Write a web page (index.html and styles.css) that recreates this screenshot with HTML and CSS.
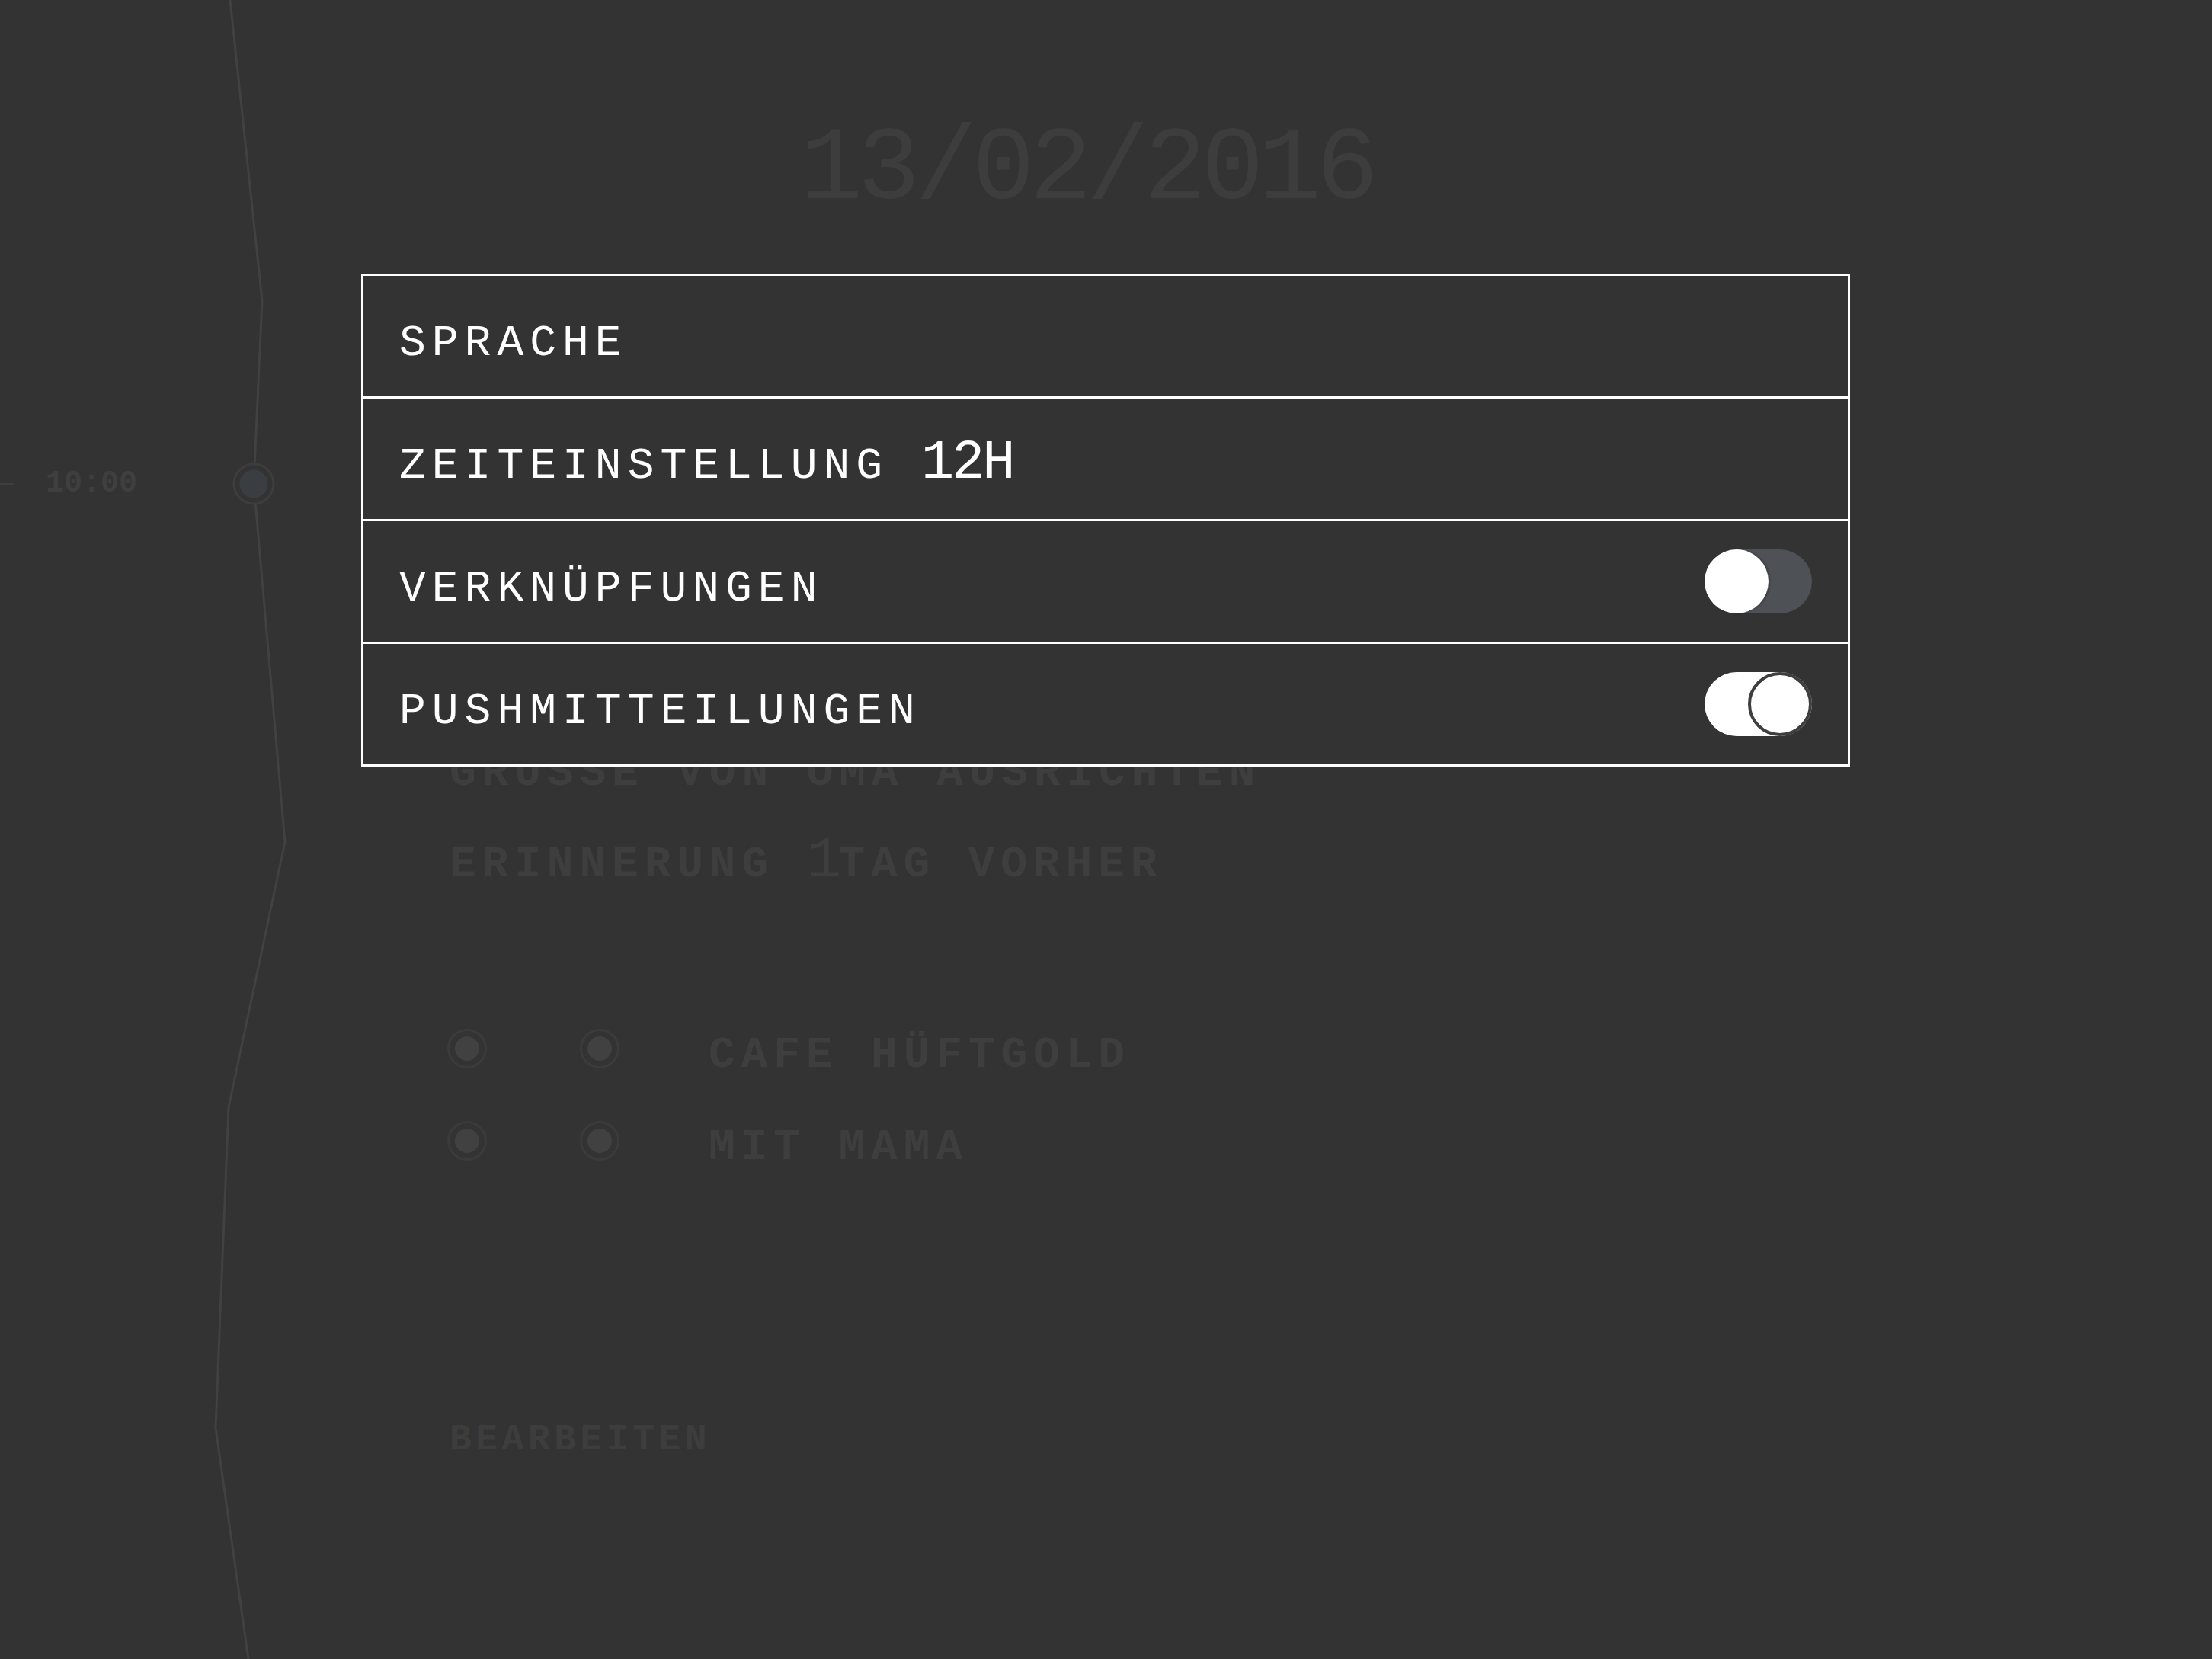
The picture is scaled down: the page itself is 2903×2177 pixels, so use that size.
FILE: index.html
```html
<!DOCTYPE html>
<html lang="de">
<head>
<meta charset="utf-8">
<title>Einstellungen</title>
<link rel="stylesheet" href="styles.css">
</head>
<body>
<div class="page">
  <svg class="timeline" width="2903" height="2177" viewBox="0 0 2903 2177" aria-hidden="true">
    <polyline class="timeline-line" points="302,0 344,394 333,635 374,1105 300,1453 283,1874 326,2177"/>
    <circle class="node-ring" cx="333" cy="635" r="26"/>
    <circle class="node-core" cx="333" cy="635" r="18.5"/>
  </svg>
  <div class="time-marker"><span class="tick"></span><span class="time">10:00</span></div>

  <main class="content">
    <div class="date">13/02/2016</div>
    <div class="note note-first">GRUSSE VON OMA AUSRICHTEN</div>
    <div class="note note-second">ERINNERUNG <span class="num">1</span>TAG VORHER</div>
    <div class="place place-first">
      <span class="radio"><span class="dot"></span></span>
      <span class="radio"><span class="dot"></span></span>
      <span class="place-name">CAFE HÜFTGOLD</span>
    </div>
    <div class="place place-second">
      <span class="radio"><span class="dot"></span></span>
      <span class="radio"><span class="dot"></span></span>
      <span class="place-name">MIT MAMA</span>
    </div>
    <div class="edit">BEARBEITEN</div>
  </main>

  <section class="settings">
    <div class="row"><span class="label">SPRACHE</span></div>
    <div class="row"><span class="label">ZEITEINSTELLUNG <span class="big">12H</span></span></div>
    <div class="row"><span class="label">VERKNÜPFUNGEN</span><span class="toggle toggle-off"><span class="knob"></span></span></div>
    <div class="row"><span class="label">PUSHMITTEILUNGEN</span><span class="toggle toggle-on"><span class="knob"></span></span></div>
  </section>
</div>
</body>
</html>
```
FILE: styles.css
```css
html, body {
  margin: 0;
  padding: 0;
  background: #333333;
}

body {
  font-family: "Liberation Mono", "DejaVu Sans Mono", monospace;
}

.page {
  position: relative;
  width: 2903px;
  height: 2177px;
  overflow: hidden;
  background: #333333;
}

/* timeline diagram */
.timeline {
  position: absolute;
  left: 0;
  top: 0;
}

.timeline-line {
  fill: none;
  stroke: #414141;
  stroke-width: 3;
}

.node-ring {
  fill: #333333;
  stroke: #3d3d3d;
  stroke-width: 3;
}

.node-core {
  fill: #3a3e42;
}

.time-marker {
  position: absolute;
  left: 0;
  top: 615px;
  display: flex;
  align-items: center;
  gap: 42px;
  height: 40px;
}

.tick {
  display: block;
  width: 18px;
  height: 3px;
  background: #3d3d3d;
}

.time {
  font-size: 40px;
  line-height: 40px;
  color: #3f3f3f;
  font-weight: bold;
}

/* background content column */
.content {
  padding-left: 590px;
  padding-top: 155px;
  color: #3e3e3e;
}

.date {
  margin-left: 460px;
  font-size: 137px;
  line-height: 137px;
  letter-spacing: -7px;
  color: #3d3d3d;
}

.note {
  font-size: 58px;
  line-height: 58px;
  letter-spacing: 7.8px;
  font-weight: bold;
}

.note-first {
  margin-top: 694px;
}

.note-second {
  margin-top: 62px;
}

.num {
  font-size: 76px;
  line-height: 0;
  letter-spacing: -4px;
  font-weight: normal;
}

.place {
  display: flex;
  align-items: center;
  height: 60px;
  margin-left: -3px;
}

.place-first {
  margin-top: 182px;
}

.place-second {
  margin-top: 61px;
}

.radio {
  width: 52px;
  height: 52px;
  box-sizing: border-box;
  border: 3px solid #3b3b3b;
  border-radius: 50%;
  display: flex;
  align-items: center;
  justify-content: center;
  margin-right: 122px;
}

.radio + .radio {
  margin-right: 117px;
}

.dot {
  width: 32px;
  height: 32px;
  border-radius: 50%;
  background: #424141;
}

.place-name {
  font-size: 58px;
  line-height: 58px;
  letter-spacing: 7.8px;
  margin-top: 18px;
  font-weight: bold;
}

.edit {
  margin-top: 338px;
  font-size: 48px;
  line-height: 48px;
  letter-spacing: 5.5px;
  font-weight: bold;
  color: #3d3d3d;
}

/* settings overlay */
.settings {
  position: absolute;
  left: 474px;
  top: 359px;
  width: 1954px;
  box-sizing: border-box;
  border: 3px solid #ffffff;
  background: #333333;
}

.row {
  height: 158px;
  border-bottom: 3px solid #ffffff;
  display: flex;
  align-items: center;
  justify-content: space-between;
  padding: 0 47px;
}

.row:last-child {
  border-bottom: none;
}

.label {
  font-size: 58px;
  line-height: 58px;
  letter-spacing: 8px;
  color: #ffffff;
  margin-top: 20px;
  white-space: nowrap;
}

.big {
  font-size: 72px;
  line-height: 0;
  letter-spacing: -3px;
}

.toggle {
  position: relative;
  width: 141px;
  height: 84px;
  border-radius: 42px;
  flex-shrink: 0;
}

.toggle-off {
  background: #4e5155;
}

.toggle-on {
  background: #ffffff;
}

.knob {
  position: absolute;
  top: 0;
  width: 84px;
  height: 84px;
  box-sizing: border-box;
  border-radius: 50%;
  background: #ffffff;
}

.toggle-off .knob {
  left: 0;
  box-shadow: 2px 0 3px rgba(0, 0, 0, 0.25);
}

.toggle-on .knob {
  right: 0;
  border: 4px solid #3e3e3e;
}
```
